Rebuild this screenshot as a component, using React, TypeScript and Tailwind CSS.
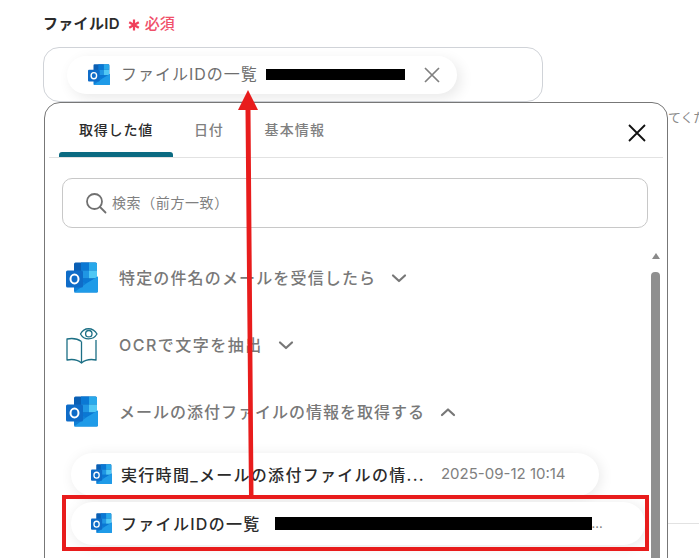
import React from 'react';

const OutlookIcon = ({ size }: { size: number }) => (
  <svg width={size} height={size} viewBox="0 0 32 31" className="shrink-0">
    <path d="M8 1.5 A1.5 1.5 0 0 1 9.5 0 H29.5 A1.5 1.5 0 0 1 31 1.5 V24 H8 Z" fill="#0a5fb4" />
    <rect x="15" y="0" width="8" height="8" fill="#0a78d4" />
    <path d="M23 0 H29.5 A1.5 1.5 0 0 1 31 1.5 V8 H23 Z" fill="#28a8ea" />
    <rect x="15" y="8" width="8" height="8" fill="#1f96e4" />
    <rect x="23" y="8" width="8" height="8" fill="#50c8f5" />
    <rect x="15" y="16" width="16" height="8" fill="#0a78d4" />
    <path d="M8 14 L20 21 L32 14 V28.5 A1.5 1.5 0 0 1 30.5 30 H9.5 A1.5 1.5 0 0 1 8 28.5 Z" fill="#0f7fd6" />
    <path d="M8 30 L21 20.5 L32 14 V28.5 A1.5 1.5 0 0 1 30.5 30 Z" fill="#1f9be8" />
    <rect x="0" y="8" width="17" height="17" rx="1.5" fill="#0f6cc8" />
    <ellipse cx="8.5" cy="16.5" rx="4" ry="4.4" fill="none" stroke="#fff" strokeWidth="2" />
  </svg>
);

const BookEyeIcon = () => (
  <svg width="32" height="38" viewBox="0 0 32 38" fill="none" stroke="#1c6f85" strokeWidth="1.3" strokeLinejoin="round" className="shrink-0">
    <path d="M15.5 15.5 C12 13 6 12 1 13 V34 C6 33 12 34 15.5 37 C19 34 25 33 30 34 V14" />
    <path d="M15.5 15.5 V37" />
    <path d="M14.5 8 C18 1 27 1 31 8 C27 14.5 18 14.5 14.5 8 Z" fill="#fff" />
    <circle cx="22.8" cy="7.7" r="3.2" />
  </svg>
);

const Chevron = ({ up }: { up?: boolean }) => (
  <svg width="16" height="16" viewBox="0 0 16 16" fill="none" stroke="#777" strokeWidth="2.2" strokeLinecap="round" strokeLinejoin="round" className="shrink-0">
    <path d={up ? 'M2 11 L8 5.5 L14 11' : 'M2 5.5 L8 11 L14 5.5'} />
  </svg>
);

const Section = ({ icon, title, up, className }: { icon: React.ReactNode; title: string; up?: boolean; className: string }) => (
  <div className="flex h-[67px] items-center pl-[21px]">
    <div className="flex w-[53px] items-center">{icon}</div>
    <span className={`text-[16px] font-medium text-[#787878] ${className}`}>{title}</span>
    <span className="ml-[15px]"><Chevron up={up} /></span>
  </div>
);

export default function App() {
  return (
    <div className="relative h-[558px] w-[699px] overflow-hidden bg-white font-['Inter','Noto_Sans_CJK_JP',sans-serif]">
      <div className="pl-[43px] pt-[13px]">
        <div className="flex h-[23px] items-center">
          <span className="text-[15px] font-semibold tracking-[0.3px] text-[#2b2b2b]">ファイルID</span>
          <svg width="12" height="12" viewBox="0 0 12 12" stroke="#f0405a" strokeWidth="2.2" className="ml-[8px]">
            <path d="M6 0.5 V11.5 M1.2 3.2 L10.8 8.8 M10.8 3.2 L1.2 8.8" />
          </svg>
          <span className="ml-[5px] text-[15px] font-medium text-[#f0506a]">必須</span>
        </div>
        <div className="mt-[11px] flex h-[55px] w-[500px] items-center rounded-[16px] border border-[#d0d3d8] pl-[23px]">
          <div className="flex h-[38px] w-[390px] items-center rounded-full bg-white pl-[21px] pr-[17px] shadow-[4px_4px_14px_rgba(0,0,0,0.09)]">
            <OutlookIcon size={22} />
            <span className="mb-[2px] ml-[11px] text-[16px] tracking-[1px] text-[#6e6e6e]">ファイルIDの一覧</span>
            <span className="ml-[8px] h-[11px] w-[139px] bg-black" />
            <svg width="16" height="16" viewBox="0 0 16 16" stroke="#808080" strokeWidth="1.7" className="ml-auto">
              <path d="M1 1 L15 15 M15 1 L1 15" />
            </svg>
          </div>
        </div>
      </div>

      {/* text behind the popup */}
      <span className="absolute left-[668px] top-[108px] whitespace-nowrap text-[13px] text-[#8a8a8a]">てくだ</span>
      <div className="absolute left-[667px] top-[523px] h-px w-[32px] bg-[#e2e2e2]" />

      {/* popup */}
      <div className="absolute left-[44px] top-[102px] h-[500px] w-[624px] rounded-[16px] border border-[#777] bg-white">
        <div className="ml-[4px] mr-[4px] flex h-[55px] items-end border-b border-[#e2e2e2] pl-[10px]">
          <div className="flex h-[54px] w-[114px] flex-col items-center justify-end">
            <span className="mb-[12px] text-[14px] font-medium tracking-[0.8px] text-[#2b2b2b]">取得した値</span>
            <div className="h-[5px] w-full rounded-t-[3px] bg-[#0b6b82]" />
          </div>
          <span className="mb-[17px] ml-[21px] text-[14px] font-medium tracking-[0.8px] text-[#808080]">日付</span>
          <span className="mb-[17px] ml-[41px] text-[14px] font-medium tracking-[1.1px] text-[#808080]">基本情報</span>
          <svg width="18" height="18" viewBox="0 0 18 18" stroke="#111" strokeWidth="1.8" className="mb-[15px] ml-auto mr-[17px]">
            <path d="M1 1 L17 17 M17 1 L1 17" />
          </svg>
        </div>
        <div className="ml-[17px] mt-[20px] flex h-[50px] w-[586px] items-center rounded-[10px] border border-[#c8c8c8] pl-[22px]">
          <svg width="22" height="22" viewBox="0 0 22 22" fill="none" stroke="#707070" strokeWidth="1.8" strokeLinecap="round">
            <circle cx="9.5" cy="9.5" r="7.5" />
            <path d="M15 15 L20.5 20.5" />
          </svg>
          <span className="mb-[2px] ml-[5px] text-[14px] tracking-[0.6px] text-[#808080]">検索（前方一致）</span>
        </div>
        <div className="mt-[16px]">
          <Section icon={<OutlookIcon size={32} />} title="特定の件名のメールを受信したら" className="tracking-[1.15px]" />
          <Section icon={<BookEyeIcon />} title="OCRで文字を抽出" className="tracking-[1.5px]" />
          <Section icon={<OutlookIcon size={32} />} title="メールの添付ファイルの情報を取得する" up className="tracking-[1px]" />
        </div>
        <div className="ml-[26px] mt-[8px] flex flex-col gap-[6px]">
          <div className="flex h-[43px] w-[528px] items-center rounded-full bg-white pl-[20px] shadow-[2px_2px_14px_rgba(0,0,0,0.09)]">
            <OutlookIcon size={21} />
            <span className="ml-[9px] text-[16px] font-medium tracking-[1.3px] text-[#2b2b2b]">実行時間_メールの添付ファイルの情...</span>
            <span className="ml-[16px] text-[15px] text-[#808080]">2025-09-12 10:14</span>
          </div>
          <div className="flex h-[43px] w-[574px] items-center rounded-full bg-white pl-[20px] shadow-[2px_2px_14px_rgba(0,0,0,0.09)]">
            <OutlookIcon size={21} />
            <span className="ml-[9px] text-[16px] font-medium tracking-[1.3px] text-[#2b2b2b]">ファイルIDの一覧</span>
            <span className="ml-[14px] h-[13px] w-[317px] bg-black" />
            <span className="text-[13px] text-[#808080]">...</span>
          </div>
        </div>
        {/* scrollbar */}
        <svg width="10" height="8" viewBox="0 0 10 8" className="absolute left-[606px] top-[149px]">
          <path d="M5 1 L9 7 H1 Z" fill="#8a8a8a" />
        </svg>
        <div className="absolute left-[606px] top-[169px] h-[330px] w-[9px] rounded-t-[4px] bg-[#8f8f8f]" />
      </div>

      {/* red annotations */}
      <div className="absolute left-[62px] top-[495px] h-[56px] w-[587px] border-[4px] border-[#e81c1c]" />
      <svg width="30" height="410" viewBox="0 0 30 410" className="absolute left-[233px] top-[90px]">
        <path d="M15 0 L25 20 H17.5 L20.5 406 H16 L12.5 20 H5 Z" fill="#e81c1c" />
      </svg>
    </div>
  );
}
